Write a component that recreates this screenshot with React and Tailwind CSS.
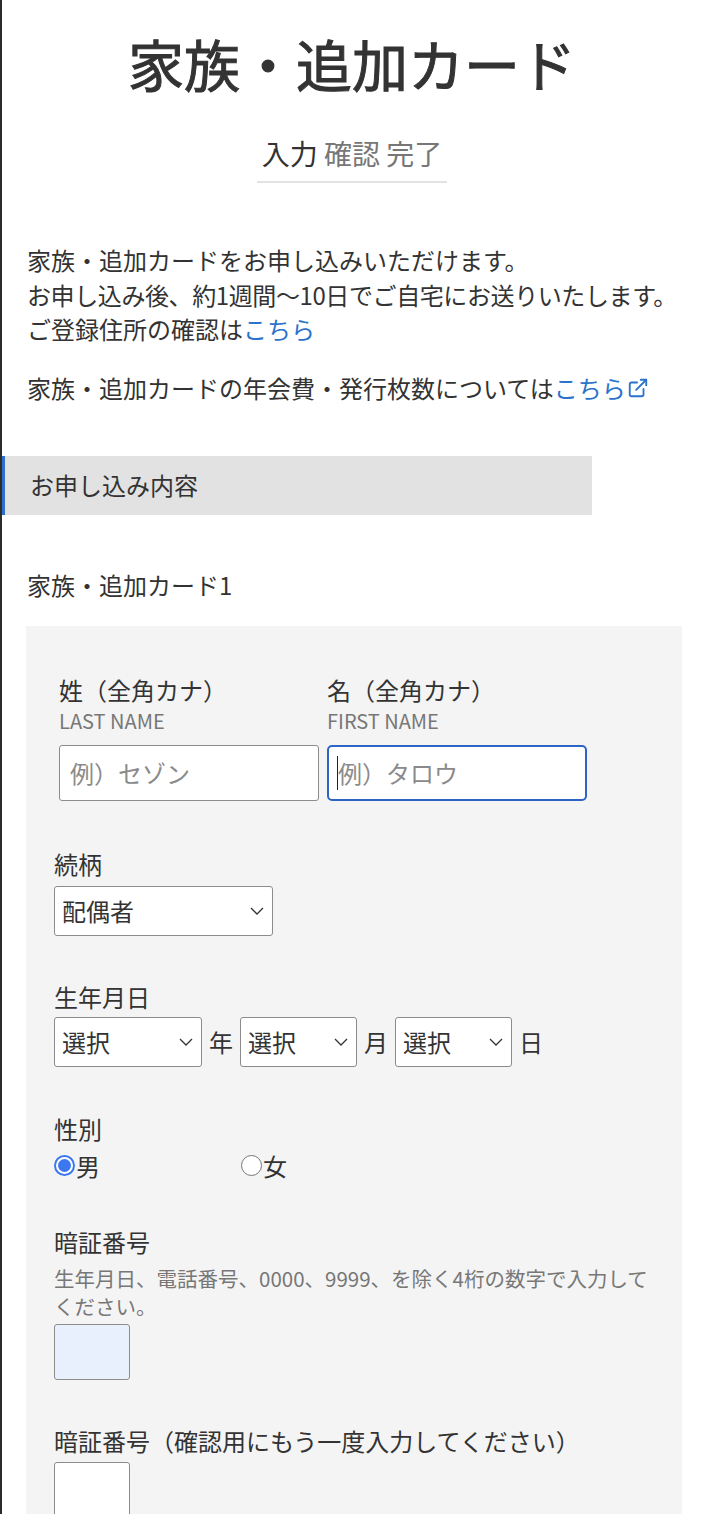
import { ExternalLink } from 'lucide-react';

function Chevron() {
  return (
    <svg width="14" height="8" viewBox="0 0 14 8" fill="none" className="shrink-0">
      <polyline points="1,1 7,7 13,1" stroke="#333" strokeWidth="1.3" />
    </svg>
  );
}

function Select({ value, width }) {
  return (
    <div
      className={`flex h-[50px] items-center justify-between rounded-[3px] border border-[#8c8c8c] bg-white pl-[7px] pr-[8px] text-[24px] leading-none ${width}`}
    >
      <span>{value}</span>
      <Chevron />
    </div>
  );
}

function Radio({ checked }) {
  return checked ? (
    <span className="flex h-[21px] w-[21px] items-center justify-center rounded-full border-2 border-[#3b78f0] bg-white">
      <span className="h-[13px] w-[13px] rounded-full bg-[#3b78f0]" />
    </span>
  ) : (
    <span className="h-[21px] w-[21px] rounded-full border-[1.5px] border-[#767676] bg-white" />
  );
}

function NameField({ label, sub, placeholder, focused }) {
  return (
    <div className="flex w-[260px] flex-col">
      <div className="text-[24px] leading-none">{label}</div>
      <div className="mt-[9px] text-[20px] leading-none text-[#777]">{sub}</div>
      <div className="relative mt-[14px]">
        <input
          type="text"
          placeholder={placeholder}
          className={
            focused
              ? 'h-[56px] w-full rounded-[5px] border-2 border-[#2e63c6] bg-white px-[9px] text-[24px] outline-none placeholder:text-[#8a8a8a]'
              : 'h-[56px] w-full rounded-[3px] border border-[#8c8c8c] bg-white px-[10px] text-[24px] outline-none placeholder:text-[#8a8a8a]'
          }
        />
        {focused && <span className="absolute left-[10px] top-[11px] h-[34px] w-px bg-[#222]" />}
      </div>
    </div>
  );
}

export default function App() {
  return (
    <div className="min-h-[1514px] border-l-2 border-[#2b2b2b] bg-white text-[#333] font-['Noto_Sans_CJK_JP',sans-serif]">
      <header className="flex flex-col items-center pt-[35px]">
        <h1 className="text-[56px] font-normal leading-none [-webkit-text-stroke:1px_#333]">家族・追加カード</h1>
        <div className="mt-[48px] border-b-2 border-[#e3e3e3] px-[5px] pb-[14px] text-[28px] leading-none">
          <span>入力</span> <span className="text-[#777]">確認</span>{' '}
          <span className="text-[#777]">完了</span>
        </div>
      </header>

      <div className="mt-[60px] px-[25px] text-[24px] leading-[34.5px]">
        <p className="whitespace-nowrap">
          家族・追加カードをお申し込みいただけます。
          <br />
          <span className="tracking-[-0.4px]">お申し込み後、約1週間〜10日でご自宅にお送りいたします。</span>
          <br />
          ご登録住所の確認は<a className="text-[#2a72cc]">こちら</a>
        </p>
        <p className="mt-[24px] flex items-center">
          家族・追加カードの年会費・発行枚数については
          <a className="flex items-center text-[#2a72cc]">
            こちら
            <ExternalLink size={22} strokeWidth={2} className="ml-[1px]" />
          </a>
        </p>
      </div>

      <div className="mt-[50.5px] flex h-[59px] w-[590px] items-center border-l-[3px] border-[#2f6fcb] bg-[#e2e2e2] pl-[25px] text-[24px] leading-none">
        お申し込み内容
      </div>

      <div className="mt-[58px] pl-[25px] text-[24px] leading-none">家族・追加カード1</div>

      <section className="ml-[24px] mr-[20px] mt-[29px] bg-[#f4f4f4] pb-[80px] pl-[28px] pr-[26px] pt-[52px]">
        <div className="flex gap-[8px] pl-[5px]">
          <NameField label="姓（全角カナ）" sub="LAST NAME" placeholder="例）セゾン" />
          <NameField label="名（全角カナ）" sub="FIRST NAME" placeholder="例）タロウ" focused />
        </div>

        <div className="mt-[51px] text-[24px] leading-none">続柄</div>
        <div className="mt-[10px]">
          <Select value="配偶者" width="w-[219px]" />
        </div>

        <div className="mt-[49px] text-[24px] leading-none">生年月日</div>
        <div className="mt-[8px] flex items-center text-[24px] leading-none">
          <Select value="選択" width="w-[148px]" />
          <span className="mx-[7px]">年</span>
          <Select value="選択" width="w-[117px]" />
          <span className="mx-[7px]">月</span>
          <Select value="選択" width="w-[117px]" />
          <span className="mx-[7px]">日</span>
        </div>

        <div className="mt-[50px] text-[24px] leading-none">性別</div>
        <div className="mt-[13px] flex items-center text-[24px] leading-none">
          <label className="flex w-[187px] items-center gap-[1px]">
            <Radio checked />
            <span>男</span>
          </label>
          <label className="flex items-center gap-[1px]">
            <Radio />
            <span>女</span>
          </label>
        </div>

        <div className="mt-[52px] text-[24px] leading-none">暗証番号</div>
        <p className="mt-[10px] max-w-[596px] text-[20.5px] leading-[28px] text-[#777]">
          生年月日、電話番号、0000、9999、を除く4桁の数字で入力してください。
        </p>
        <input
          type="password"
          className="mt-[4px] block h-[56px] w-[76px] rounded-[3px] border border-[#8c8c8c] bg-[#e8f0fe] outline-none"
        />

        <div className="mt-[49px] text-[24px] leading-none">暗証番号（確認用にもう一度入力してください）</div>
        <input
          type="password"
          className="mt-[9px] block h-[56px] w-[76px] rounded-[3px] border border-[#8c8c8c] bg-white outline-none"
        />
      </section>
    </div>
  );
}
